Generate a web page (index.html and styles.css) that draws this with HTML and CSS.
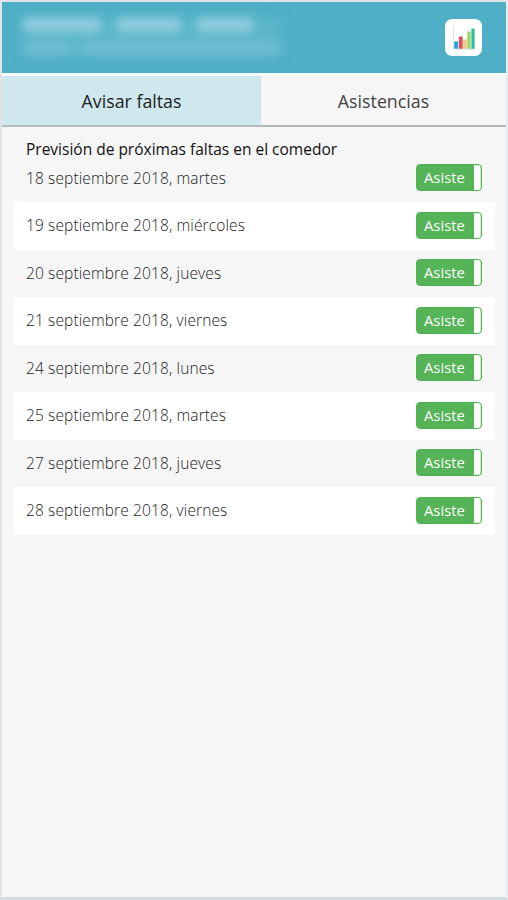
FILE: index.html
```html
<!DOCTYPE html>
<html lang="es">
<head>
<meta charset="utf-8">
<title>Avisar faltas</title>
<link rel="stylesheet" href="styles.css">
</head>
<body>
<div class="app">
  <header class="header">
    <div class="redacted">
      <div class="line line-name"><i class="w1"></i><i class="w2"></i><i class="w3"></i></div>
      <div class="line line-detail"><i class="w4"></i><i class="w5"></i></div>
    </div>
    <button class="chart-button" aria-label="Gráfico">
      <svg width="24" height="26" viewBox="0 0 24 26">
        <path d="M1.5 1.5V24H23" fill="none" stroke="#e3e5e8" stroke-width="1.4"/>
        <rect x="2.2" y="16.5" width="4" height="7.2" fill="#22a5dc"/>
        <rect x="6.9" y="11.5" width="3.8" height="12.2" fill="#e0505a"/>
        <rect x="11.2" y="14.5" width="3.6" height="9.2" fill="#f4c683"/>
        <rect x="15.3" y="6.5" width="3.4" height="17.2" fill="#9bd470"/>
        <rect x="19.4" y="3.5" width="3.2" height="20.2" fill="#2dbd9b"/>
      </svg>
    </button>
  </header>
  <nav class="tabs">
    <div class="tab active"><span>Avisar faltas</span></div>
    <div class="tab"><span>Asistencias</span></div>
  </nav>
  <main class="content">
    <h1 class="title">Previsión de próximas faltas en el comedor</h1>
    <ul class="days">
      <li class="day"><span class="date">18 septiembre 2018, martes</span><span class="toggle">Asiste</span></li>
      <li class="day"><span class="date">19 septiembre 2018, miércoles</span><span class="toggle">Asiste</span></li>
      <li class="day"><span class="date">20 septiembre 2018, jueves</span><span class="toggle">Asiste</span></li>
      <li class="day"><span class="date">21 septiembre 2018, viernes</span><span class="toggle">Asiste</span></li>
      <li class="day"><span class="date">24 septiembre 2018, lunes</span><span class="toggle">Asiste</span></li>
      <li class="day"><span class="date">25 septiembre 2018, martes</span><span class="toggle">Asiste</span></li>
      <li class="day"><span class="date">27 septiembre 2018, jueves</span><span class="toggle">Asiste</span></li>
      <li class="day"><span class="date">28 septiembre 2018, viernes</span><span class="toggle">Asiste</span></li>
    </ul>
  </main>
</div>
</body>
</html>
```

FILE: styles.css
```css
* { box-sizing: border-box; }
body {
  margin: 0;
  font-family: "Open Sans", "Noto Sans", sans-serif;
  color: #111;
}
.app {
  height: 900px;
  display: flex;
  flex-direction: column;
  background: #f6f6f6;
  border: 2px solid #dfe4e8;
  border-right-color: #e9edef;
  border-bottom: 3px solid #cfdce1;
  overflow: hidden;
}
.header {
  height: 71px;
  flex: none;
  display: flex;
  justify-content: space-between;
  align-items: flex-start;
  padding: 15px 24px 0 20px;
  background: #4eafc6;
}
.redacted {
  display: flex;
  flex-direction: column;
  gap: 9px;
  width: 260px;
  background: #5ab5ca;
  filter: blur(5px);
}
.line { display: flex; gap: 14px; }
.line i { display: block; height: 15px; border-radius: 6px; background: #8fcedd; }
.line-detail { gap: 8px; }
.line-detail i { background: #6fbdd1; }
.w1 { width: 80px; }
.w2 { width: 66px; }
.w3 { width: 58px; }
.w4 { width: 50px; }
.w5 { width: 200px; }
.chart-button {
  width: 37px;
  height: 37px;
  margin-top: 2px;
  padding: 0;
  border: 0;
  border-radius: 7px;
  background: #fff;
  display: flex;
  align-items: center;
  justify-content: center;
}
.tabs {
  height: 54px;
  flex: none;
  display: flex;
  border-top: 3px solid #fbfdfd;
  border-bottom: 2px solid #b8b9ba;
}
.tab {
  flex: 1;
  display: flex;
  align-items: center;
  justify-content: center;
  font-size: 17.8px;
  color: #444;
}
.tab.active { flex: none; width: 259px; background: #cfe8ed; color: #1c2224; }
.content { padding: 12.5px 11px 0 12px; }
.title {
  height: 15px;
  margin: 0 0 0 12px;
  font-size: 15.5px;
  line-height: 19px;
  font-weight: 400;
  color: #111;
}
.days { margin: 0; padding: 0; list-style: none; }
.day {
  height: 47.5px;
  display: flex;
  align-items: center;
  justify-content: space-between;
  padding: 0 13px 0 12px;
}
.day:nth-child(even) { background: #fff; }
.date {
  margin-bottom: 1px;
  font-size: 15.5px;
  font-weight: 300;
  letter-spacing: 0.12px;
  color: #222;
}
.toggle {
  width: 66px;
  height: 27px;
  margin-bottom: 1.5px;
  padding-left: 7px;
  border: 1px solid #4fb152;
  border-radius: 4px;
  background: linear-gradient(to right, #55b457 57px, #fff 57px, #fff 63px, #a5d8a6 64px);
  color: #fff;
  font-size: 14.8px;
  font-weight: 500;
  line-height: 25px;
}
```
